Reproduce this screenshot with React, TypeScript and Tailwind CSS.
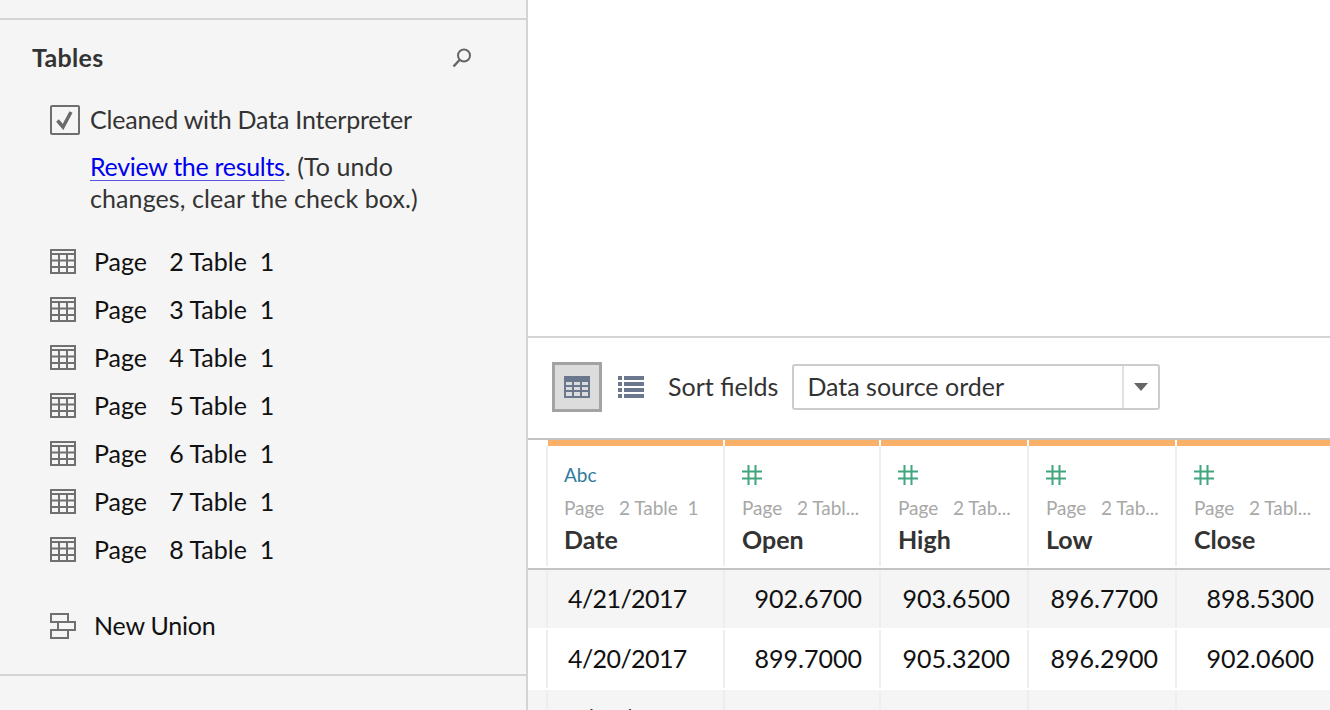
import React from "react";

const TableIcon = () => (
  <svg width="26" height="25" viewBox="0 0 26 25" fill="none" className="shrink-0">
    <path d="M1 1H25V24H1Z M1 5H25 M1 11.5H25 M1 18H25 M9 5V24 M17 5V24" stroke="#707070" strokeWidth="2" />
  </svg>
);

const pages = [2, 3, 4, 5, 6, 7, 8];
const cols = [
  { name: "Open", sub: "Page   2 Tabl..." },
  { name: "High", sub: "Page   2 Tab..." },
  { name: "Low", sub: "Page   2 Tab..." },
  { name: "Close", sub: "Page   2 Tabl..." },
];
const rows = [
  ["4/21/2017", "902.6700", "903.6500", "896.7700", "898.5300"],
  ["4/20/2017", "899.7000", "905.3200", "896.2900", "902.0600"],
  ["4/19/2017", "", "", "", ""],
];
const grid = "grid grid-cols-[18px_175px_154px_146px_146px_153px] gap-x-[2px]";

const Hash = () => (
  <svg width="20" height="20" viewBox="0 0 20 20" fill="none">
    <path d="M0 6.5H20 M0 13.5H20 M6.5 0V20 M13.5 0V20" stroke="#41a57e" strokeWidth="2" />
  </svg>
);

export default function App() {
  return (
    <div className="flex h-[710px] w-[1330px] overflow-hidden bg-white font-['Lato',sans-serif] text-[25px] text-[#333]">
      <aside className="flex h-full w-[528px] shrink-0 flex-col border-r-2 border-[#d4d4d4] bg-[#f5f5f5]">
        <div className="mt-[18px] h-[658px] border-y-2 border-[#d4d4d4] pl-[32px] pr-[54px]">
          <div className="mt-[22px] flex h-[32px] items-center justify-between">
            <span className="font-bold tracking-[0.3px]">Tables</span>
            <svg width="20" height="20" viewBox="0 0 20 20" fill="none">
              <circle cx="12" cy="7.5" r="6" stroke="#666" strokeWidth="2" />
              <path d="M7.5 12L1.5 18.5" stroke="#666" strokeWidth="2.5" />
            </svg>
          </div>
          <div className="ml-[18px] mt-[27px] flex items-center gap-[10px]">
            <span className="flex h-[30px] w-[30px] items-center justify-center rounded-[2px] border-2 border-[#6e6e6e]">
              <svg width="20" height="20" viewBox="0 0 20 20" fill="none">
                <path d="M2.5 10.5L8 17L16 2" stroke="#6a6a6a" strokeWidth="3.5" />
              </svg>
            </span>
            <span className="tracking-[-0.2px]">Cleaned with Data Interpreter</span>
          </div>
          <p className="ml-[58px] mt-[11px] leading-[32px] tracking-[0.1px]">
            <span className="tracking-[-0.3px] text-[#0000ee] underline decoration-[#5555dd] decoration-1 underline-offset-[4px]">Review the results</span>
            . (To undo changes, clear the check box.)
          </p>
          <ul className="ml-[18px] mt-[24px] text-[#111]">
            {pages.map((p) => (
              <li key={p} className="flex h-[48px] items-center gap-[18px] whitespace-pre">
                <TableIcon />
                <span>
                  <span className="mr-[3px]">Page</span>
                  {`   ${p} Table  1`}
                </span>
              </li>
            ))}
            <li className="mt-[28px] flex h-[48px] items-center gap-[18px]">
              <svg width="26" height="26" viewBox="0 0 26 26" fill="none" className="shrink-0">
                <path d="M1 1H18V9H1Z M8 9H25V17H8Z M1 17H18V25H1Z" stroke="#707070" strokeWidth="2" />
              </svg>
              <span className="tracking-[-0.2px]">New Union</span>
            </li>
          </ul>
        </div>
      </aside>

      <main className="flex min-w-0 flex-1 flex-col">
        <div className="h-[338px] shrink-0 border-b-2 border-[#d4d4d4]" />
        <div className="flex h-[102px] shrink-0 items-center border-b-2 border-[#c4c4c4] pb-[2px] pl-[24px]">
          <button className="flex h-[50px] w-[50px] items-center justify-center border-[3px] border-[#a3a3a3] bg-[#dcdcdc]">
            <svg width="26" height="22" viewBox="0 0 26 22">
              <path fillRule="evenodd" fill="#6b778c" d="M0 0H26V22H0Z M2 6V9H8V6Z M10 6V9H16V6Z M18 6V9H24V6Z M2 11V14H8V11Z M10 11V14H16V11Z M18 11V14H24V11Z M2 16V20H8V16Z M10 16V20H16V16Z M18 16V20H24V16Z" />
            </svg>
          </button>
          <svg width="26" height="22" viewBox="0 0 26 22" className="ml-[16px]">
            <path fill="#6b778c" d="M0 0H4V4H0Z M6 0H26V4H6Z M0 6H4V10H0Z M6 6H26V10H6Z M0 12H4V16H0Z M6 12H26V16H6Z M0 18H4V22H0Z M6 18H26V22H6Z" />
          </svg>
          <span className="ml-[24px]">Sort fields</span>
          <div className="ml-[14px] flex h-[46px] w-[368px] items-center rounded-[3px] border-2 border-[#ccc]">
            <span className="flex-1 pl-[13px]">Data source order</span>
            <span className="flex h-full w-[36px] items-center justify-center border-l-2 border-[#e0e0e0]">
              <svg width="14" height="8" viewBox="0 0 14 8"><path d="M0 0H14L7 8Z" fill="#666" /></svg>
            </span>
          </div>
        </div>
        <div className="h-[128px] shrink-0">
          <div className={`${grid} h-[6px]`}>
            <div />
            <div className="bg-[#f9b16a]" />
            {cols.map((c) => (
              <div key={c.name} className="bg-[#f9b16a]" />
            ))}
          </div>
          <div className={`${grid} h-[120px] bg-[#eeeeee]`}>
            <div className="bg-white" />
            <div className="bg-white pl-[16px] pt-[19px]">
              <div className="h-[20px] text-[19px] leading-[20px] text-[#2f7c9d]">Abc</div>
              <div className="mt-[11px] whitespace-pre text-[19px] leading-[24px] text-[#a8a8a8]">Page   2 Table  1</div>
              <div className="mt-[4px] font-bold leading-[30px]">Date</div>
            </div>
            {cols.map((c) => (
              <div key={c.name} className="bg-white pl-[17px] pt-[19px]">
                <div className="h-[20px]"><Hash /></div>
                <div className="mt-[11px] whitespace-pre text-[19px] leading-[24px] text-[#a8a8a8]">{c.sub}</div>
                <div className="mt-[4px] font-bold leading-[30px]">{c.name}</div>
              </div>
            ))}
          </div>
        </div>
        <div className="shrink-0 border-t-2 border-[#c4c4c4]">
          {rows.map((r, i) => (
            <div key={r[0]} className={`${grid} mb-[2px] h-[58px] items-stretch bg-[#eeeeee] text-[#111]`}>
              <div className={i % 2 ? "bg-white" : "bg-[#f5f5f5]"} />
              {r.map((v, j) => (
                <div
                  key={j}
                  className={`flex items-center ${i % 2 ? "bg-white" : "bg-[#f5f5f5]"} ${j === 0 ? "justify-start pl-[20px] tracking-[-0.6px]" : j === 4 ? "justify-end pr-[16px]" : "justify-end pr-[17px]"}`}
                >
                  {v}
                </div>
              ))}
            </div>
          ))}
        </div>
      </main>
    </div>
  );
}
